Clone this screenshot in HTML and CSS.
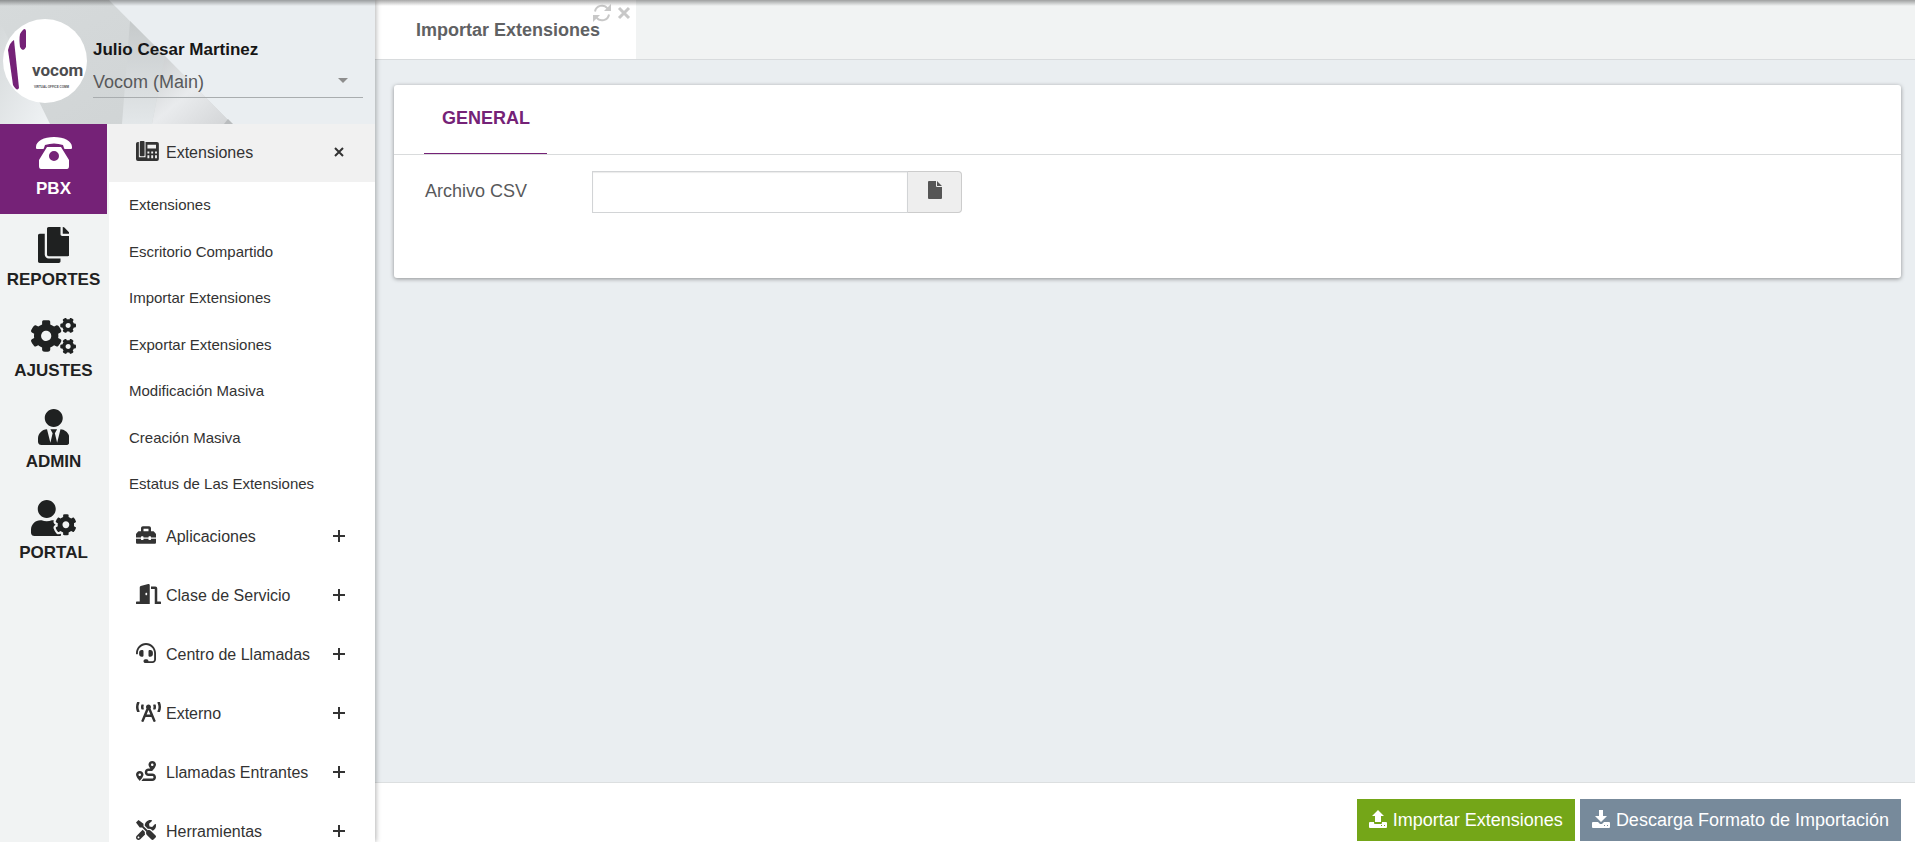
FILE: index.html
```html
<!DOCTYPE html>
<html lang="es">
<head>
<meta charset="utf-8">
<title>Importar Extensiones</title>
<link rel="stylesheet" href="styles.css">
</head>
<body>
<div class="app">
  <aside class="sidebar">
    <header class="profile">
      <svg class="profile-art" viewBox="0 0 375 124" preserveAspectRatio="none" aria-hidden="true">
        <defs>
          <linearGradient id="g1" x1="0" y1="0" x2="1" y2="1"><stop offset="0" stop-color="#d6dadb"/><stop offset="1" stop-color="#cfd3d4"/></linearGradient>
          <linearGradient id="g2" x1="0" y1="0" x2="1" y2="1"><stop offset="0" stop-color="#d5d9da"/><stop offset="1" stop-color="#f0f3f5"/></linearGradient>
          <linearGradient id="g3" x1="0" y1="0" x2="1" y2="1"><stop offset="0" stop-color="#c9cccd"/><stop offset=".5" stop-color="#e9ebed"/><stop offset="1" stop-color="#d2d4d6"/></linearGradient>
          <linearGradient id="g4" x1="0" y1="0" x2="0" y2="1"><stop offset="0" stop-color="#c6cacb"/><stop offset="1" stop-color="#e3e7e9"/></linearGradient>
        </defs>
        <path d="M0 0H109L232 124H0Z" fill="url(#g1)"/>
        <path d="M0 22L50 124H0Z" fill="url(#g2)"/>
        <path d="M130 21L165 56L152 124H122Z" fill="url(#g4)"/>
        <path d="M165 56L232 124H152Z" fill="url(#g3)"/>
        <path d="M228 119L233 124H224Z" fill="#b9bcbe"/>
      </svg>
      <svg class="avatar" viewBox="0 0 84 84" role="img" aria-label="Vocom">
        <circle cx="42" cy="42" r="42" fill="#fff"/>
        <path d="M5 31Q7 23 11 21L16 69Q14 73 10 66Z" fill="#752277"/>
        <path d="M17 15Q22 7 23 12V28Q20 34 17 28Q16 20 17 15Z" fill="#752277"/>
        <text class="logo-word" x="29" y="57">vocom</text>
        <text class="logo-tag" x="31" y="69">VIRTUAL OFFICE COMM</text>
      </svg>
      <div class="profile-info">
        <strong class="profile-name">Julio Cesar Martinez</strong>
        <div class="tenant">
          <select class="tenant-select" aria-label="Empresa"><option>Vocom (Main)</option></select>
          <svg class="tenant-caret" viewBox="0 0 10 5" aria-hidden="true"><path d="M0 0H10L5 5Z"/></svg>
        </div>
      </div>
    </header>

    <div class="menus">
      <nav class="modules" aria-label="Módulos">
        <a class="module active" href="#">
          <svg viewBox="0 0 36 36"><path fill-rule="evenodd" d="M0 11C0 5 8 1 18 1S36 5 36 11V12Q36 13 35 13H29Q28 13 28 12L27 9Q18 6 9 9L8 12Q8 13 7 13H1Q0 13 0 12ZM11 11H25L33 24V30Q33 33 31 33H5Q3 33 3 30V24ZM18 15A5 5 0 1 0 18 25A5 5 0 1 0 18 15Z"/></svg>
          <span>PBX</span>
        </a>
        <a class="module" href="#">
          <svg viewBox="0 0 448 512"><path d="M320 448v40c0 13.255-10.745 24-24 24H24c-13.255 0-24-10.745-24-24V120c0-13.255 10.745-24 24-24h72v296c0 30.879 25.121 56 56 56h168zm0-344V0H152c-13.255 0-24 10.745-24 24v368c0 13.255 10.745 24 24 24h272c13.255 0 24-10.745 24-24V128H344c-13.2 0-24-10.8-24-24zm120.971-31.029L375.029 7.029A24 24 0 0 0 358.059 0H352v96h96v-6.059a24 24 0 0 0-7.029-16.97z"/></svg>
          <span>REPORTES</span>
        </a>
        <a class="module" href="#">
          <svg viewBox="0 0 640 512"><path d="M512.1 191l-8.2 14.3c-3 5.3-9.4 7.5-15.1 5.4-11.8-4.4-22.6-10.7-32.1-18.6-4.6-3.8-5.8-10.5-2.8-15.7l8.2-14.3c-6.9-8-12.3-17.3-15.9-27.4h-16.5c-6 0-11.2-4.3-12.2-10.3-2-12-2.1-24.6 0-37.1 1-6 6.2-10.4 12.2-10.4h16.5c3.6-10.1 9-19.4 15.9-27.4l-8.2-14.3c-3-5.2-1.9-11.9 2.8-15.7 9.5-7.9 20.4-14.2 32.1-18.6 5.7-2.1 12.1.1 15.1 5.4l8.2 14.3c10.5-1.9 21.2-1.9 31.7 0L552 6.3c3-5.3 9.4-7.5 15.1-5.4 11.8 4.4 22.6 10.7 32.1 18.6 4.6 3.8 5.8 10.5 2.8 15.7l-8.2 14.3c6.9 8 12.3 17.3 15.9 27.4h16.5c6 0 11.2 4.3 12.2 10.3 2 12 2.1 24.6 0 37.1-1 6-6.2 10.4-12.2 10.4h-16.5c-3.6 10.1-9 19.4-15.9 27.4l8.2 14.3c3 5.2 1.9 11.9-2.8 15.7-9.5 7.9-20.4 14.2-32.1 18.6-5.7 2.1-12.1-.1-15.1-5.4l-8.2-14.3c-10.4 1.9-21.2 1.9-31.7 0zm-10.5-58.8c38.5 29.6 82.4-14.3 52.8-52.8-38.5-29.7-82.4 14.3-52.8 52.8zM386.3 286.1l33.7 16.8c10.1 5.8 14.5 18.1 10.5 29.1-8.9 24.2-26.4 46.4-42.6 65.8-7.4 8.9-20.2 11.1-30.3 5.3l-29.1-16.8c-16 13.7-34.6 24.6-54.9 31.7v33.6c0 11.6-8.3 21.6-19.7 23.6-24.6 4.2-50.4 4.4-75.9 0-11.5-2-20-11.9-20-23.6V418c-20.3-7.2-38.9-18-54.9-31.7L74 403c-10 5.8-22.9 3.6-30.3-5.3-16.2-19.4-33.3-41.6-42.2-65.7-4-10.9.4-23.2 10.5-29.1l33.3-16.8c-3.9-20.9-3.9-42.4 0-63.4L12 205.8c-10.1-5.8-14.6-18.1-10.5-29 8.9-24.2 26-46.4 42.2-65.8 7.4-8.9 20.2-11.1 30.3-5.3l29.1 16.8c16-13.7 34.6-24.6 54.9-31.7V57.1c0-11.5 8.2-21.5 19.6-23.5 24.6-4.2 50.5-4.4 76-.1 11.5 2 20 11.9 20 23.6v33.6c20.3 7.2 38.9 18 54.9 31.7l29.1-16.8c10-5.8 22.9-3.6 30.3 5.3 16.2 19.4 33.2 41.6 42.1 65.8 4 10.9.1 23.2-10 29.1l-33.7 16.8c3.9 21 3.9 42.5 0 63.5zm-117.6 21.1c59.2-77-28.7-164.9-105.7-105.7-59.2 77 28.7 164.9 105.7 105.7zm243.4 182.7l-8.2 14.3c-3 5.3-9.4 7.5-15.1 5.4-11.8-4.4-22.6-10.7-32.1-18.6-4.6-3.8-5.8-10.5-2.8-15.7l8.2-14.3c-6.9-8-12.3-17.3-15.9-27.4h-16.5c-6 0-11.2-4.3-12.2-10.3-2-12-2.1-24.6 0-37.1 1-6 6.2-10.4 12.2-10.4h16.5c3.6-10.1 9-19.4 15.9-27.4l-8.2-14.3c-3-5.2-1.9-11.9 2.8-15.7 9.5-7.9 20.4-14.2 32.1-18.6 5.7-2.1 12.1.1 15.1 5.4l8.2 14.3c10.5-1.9 21.2-1.9 31.7 0l8.2-14.3c3-5.3 9.4-7.5 15.1-5.4 11.8 4.4 22.6 10.7 32.1 18.6 4.6 3.8 5.8 10.5 2.8 15.7l-8.2 14.3c6.9 8 12.3 17.3 15.9 27.4h16.5c6 0 11.2 4.3 12.2 10.3 2 12 2.1 24.6 0 37.1-1 6-6.2 10.4-12.2 10.4h-16.5c-3.6 10.1-9 19.4-15.9 27.4l8.2 14.3c3 5.2 1.9 11.9-2.8 15.7-9.5 7.9-20.4 14.2-32.1 18.6-5.7 2.1-12.1-.1-15.1-5.4l-8.2-14.3c-10.4 1.9-21.2 1.9-31.7 0zM501.6 431c38.5 29.6 82.4-14.3 52.8-52.8-38.5-29.6-82.4 14.3-52.8 52.8z"/></svg>
          <span>AJUSTES</span>
        </a>
        <a class="module" href="#">
          <svg viewBox="0 0 448 512"><path d="M224 256c70.7 0 128-57.3 128-128S294.7 0 224 0 96 57.3 96 128s57.3 128 128 128zm95.8 32.6L272 480l-32-136 32-56h-96l32 56-32 136-47.8-191.4C56.9 292 0 350.3 0 422.4V464c0 26.5 21.5 48 48 48h352c26.5 0 48-21.5 48-48v-41.6c0-72.1-56.9-130.4-128.2-133.8z"/></svg>
          <span>ADMIN</span>
        </a>
        <a class="module" href="#">
          <svg viewBox="0 0 640 512"><path d="M610.5 373.3c2.6-14.1 2.6-28.5 0-42.6l25.8-14.9c3-1.7 4.3-5.2 3.3-8.5-6.7-21.6-18.2-41.2-33.2-57.4-2.3-2.5-6-3.1-9-1.4l-25.8 14.9c-10.9-9.3-23.4-16.5-36.9-21.3v-29.8c0-3.4-2.4-6.4-5.7-7.1-22.3-5-45-4.8-66.2 0-3.3.7-5.7 3.7-5.7 7.1v29.8c-13.5 4.8-26 12-36.9 21.3l-25.8-14.9c-2.9-1.7-6.7-1.1-9 1.4-15 16.2-26.5 35.8-33.2 57.4-1 3.3.4 6.8 3.3 8.5l25.8 14.9c-2.6 14.1-2.6 28.5 0 42.6l-25.8 14.9c-3 1.7-4.3 5.2-3.3 8.5 6.7 21.6 18.2 41.1 33.2 57.4 2.3 2.5 6 3.1 9 1.4l25.8-14.9c10.9 9.3 23.4 16.5 36.9 21.3v29.8c0 3.4 2.4 6.4 5.7 7.1 22.3 5 45 4.8 66.2 0 3.3-.7 5.7-3.7 5.7-7.1v-29.8c13.5-4.8 26-12 36.9-21.3l25.8 14.9c2.9 1.7 6.7 1.1 9-1.4 15-16.2 26.5-35.8 33.2-57.4 1-3.3-.4-6.8-3.3-8.5l-25.8-14.9zM496 400.5c-26.8 0-48.5-21.8-48.5-48.5s21.8-48.5 48.5-48.5 48.5 21.8 48.5 48.5-21.7 48.5-48.5 48.5zM224 256c70.7 0 128-57.3 128-128S294.7 0 224 0 96 57.3 96 128s57.3 128 128 128zm201.2 226.5c-2.3-1.2-4.6-2.6-6.8-3.9l-7.9 4.6c-6 3.4-12.8 5.3-19.6 5.3-10.9 0-21.4-4.6-28.9-12.6-18.3-19.8-32.3-43.9-40.2-69.6-5.5-17.7 1.9-36.4 17.9-45.7l7.9-4.6c-.1-2.6-.1-5.2 0-7.8l-7.9-4.6c-16-9.2-23.4-28-17.9-45.7.9-2.9 2.2-5.8 3.2-8.7-3.8-.3-7.5-1.2-11.4-1.2h-16.7c-22.2 10.2-46.9 16-72.9 16s-50.6-5.8-72.9-16h-16.7C60.2 288 0 348.2 0 422.4V464c0 26.5 21.5 48 48 48h352c10.1 0 19.5-3.2 27.2-8.5-1.2-3.8-2-7.7-2-11.8v-9.2z"/></svg>
          <span>PORTAL</span>
        </a>
      </nav>

      <nav class="menu" aria-label="PBX">
        <button class="group open" type="button" aria-expanded="true">
          <svg class="group-icon" viewBox="0 0 24 21" preserveAspectRatio="xMinYMid"><path fill-rule="evenodd" d="M0 3Q0 1 2 1H3V17H10V1H22Q24 1 24 3V19Q24 21 22 21H2Q0 21 0 19ZM12 4V8H21V4ZM12 11V13H14V11ZM12 15V18H14V15ZM16 11V13H18V11ZM16 15V18H18V15ZM20 11V13H22V11ZM20 15V18H22V15Z"/><rect x="4" y="0" width="5" height="16" rx="1"/></svg>
          <span class="group-label">Extensiones</span>
          <svg class="group-mark" viewBox="0 0 12 12"><path d="M2 2L10 10M10 2L2 10"/></svg>
        </button>
        <ul class="submenu">
          <li><a href="#">Extensiones</a></li>
          <li><a href="#">Escritorio Compartido</a></li>
          <li><a href="#">Importar Extensiones</a></li>
          <li><a href="#">Exportar Extensiones</a></li>
          <li><a href="#">Modificación Masiva</a></li>
          <li><a href="#">Creación Masiva</a></li>
          <li><a href="#">Estatus de Las Extensiones</a></li>
        </ul>
        <button class="group" type="button" aria-expanded="false">
          <svg class="group-icon" viewBox="0 0 512 512" preserveAspectRatio="xMinYMid"><path d="M502.63 214.63l-45.25-45.25c-6-6-14.14-9.37-22.63-9.37H384V80c0-26.51-21.49-48-48-48H176c-26.51 0-48 21.49-48 48v80H77.25c-8.49 0-16.62 3.37-22.63 9.37L9.37 214.63c-6 6-9.37 14.14-9.37 22.63V320h128v-16c0-8.84 7.16-16 16-16h32c8.84 0 16 7.16 16 16v16h128v-16c0-8.84 7.16-16 16-16h32c8.84 0 16 7.16 16 16v16h128v-82.75c0-8.48-3.37-16.62-9.37-22.62zM320 160H192V96h128v64zm64 208c0 8.84-7.16 16-16 16h-32c-8.84 0-16-7.16-16-16v-16H192v16c0 8.84-7.16 16-16 16h-32c-8.84 0-16-7.16-16-16v-16H0v96c0 17.67 14.33 32 32 32h448c17.67 0 32-14.33 32-32v-96H384v16z"/></svg>
          <span class="group-label">Aplicaciones</span>
          <svg class="group-mark" viewBox="0 0 12 12"><path d="M0 6H12M6 0V12"/></svg>
        </button>
        <button class="group" type="button" aria-expanded="false">
          <svg class="group-icon" viewBox="0 0 640 512" preserveAspectRatio="xMinYMid"><path d="M624 448h-80V113.45C544 86.19 522.47 64 496 64H384v64h96v384h144c8.84 0 16-7.16 16-16v-32c0-8.84-7.16-16-16-16zM312.24 1.01l-192 49.74C105.99 54.44 96 67.7 96 82.92V448H16c-8.84 0-16 7.16-16 16v32c0 8.84 7.16 16 16 16h336V33.18c0-21.58-19.56-37.41-39.76-32.17zM264 288c-13.25 0-24-14.33-24-32s10.75-32 24-32 24 14.33 24 32-10.75 32-24 32z"/></svg>
          <span class="group-label">Clase de Servicio</span>
          <svg class="group-mark" viewBox="0 0 12 12"><path d="M0 6H12M6 0V12"/></svg>
        </button>
        <button class="group" type="button" aria-expanded="false">
          <svg class="group-icon" viewBox="0 0 512 512" preserveAspectRatio="xMinYMid"><path d="M192 208c0-17.67-14.33-32-32-32h-16c-35.35 0-64 28.65-64 64v48c0 35.35 28.65 64 64 64h16c17.67 0 32-14.33 32-32V208zm176 144c35.35 0 64-28.65 64-64v-48c0-35.35-28.65-64-64-64h-16c-17.67 0-32 14.33-32 32v112c0 17.67 14.33 32 32 32h16zM256 0C113.18 0 4.58 118.83 0 256v16c0 8.84 7.16 16 16 16h16c8.84 0 16-7.16 16-16v-16c0-114.69 93.31-208 208-208s208 93.31 208 208h-.12c.08 2.43.12 165.72.12 165.72 0 23.35-18.93 42.28-42.28 42.28H320c0-26.51-21.49-48-48-48h-32c-26.51 0-48 21.49-48 48s21.49 48 48 48h181.72c49.86 0 90.28-40.42 90.28-90.28V256C507.42 118.83 398.82 0 256 0z"/></svg>
          <span class="group-label">Centro de Llamadas</span>
          <svg class="group-mark" viewBox="0 0 12 12"><path d="M0 6H12M6 0V12"/></svg>
        </button>
        <button class="group" type="button" aria-expanded="false">
          <svg class="group-icon" viewBox="0 0 640 512" preserveAspectRatio="xMinYMid"><path d="M150.94 192h33.73c11.01 0 18.61-10.83 14.86-21.18-4.93-13.58-7.55-27.98-7.55-42.82s2.62-29.24 7.55-42.82C203.29 74.83 195.68 64 184.67 64h-33.73c-7.01 0-13.46 4.49-15.41 11.23C130.64 92.21 128 109.88 128 128c0 18.12 2.64 35.79 7.54 52.76 1.94 6.74 8.39 11.24 15.4 11.24zM89.92 23.34C95.56 12.72 87.97 0 75.96 0H40.63c-6.27 0-12.14 3.59-14.74 9.31C9.4 45.54 0 85.65 0 128c0 24.75 3.12 68.33 26.69 118.86 2.62 5.63 8.42 9.14 14.61 9.14h34.84c12.02 0 19.61-12.74 13.95-23.37-49.78-93.32-16.71-178.15-.17-209.29zM614.06 9.29C611.46 3.58 605.6 0 599.33 0h-35.42c-11.98 0-19.66 12.66-14.02 23.25 18.27 34.29 48.42 119.42.28 209.23-5.72 10.68 1.8 23.52 13.91 23.52h35.23c6.27 0 12.13-3.58 14.73-9.29C630.57 210.48 640 170.36 640 128s-9.42-82.48-25.94-118.71zM489.06 64h-33.73c-11.01 0-18.61 10.83-14.86 21.18 4.93 13.58 7.55 27.98 7.55 42.82s-2.62 29.24-7.55 42.82c-3.76 10.35 3.85 21.18 14.86 21.18h33.73c7.02 0 13.46-4.49 15.41-11.24 4.9-16.97 7.53-34.64 7.53-52.76 0-18.12-2.64-35.79-7.54-52.76-1.94-6.75-8.39-11.24-15.4-11.24zm-116.3 100.12c7.05-10.29 11.2-22.71 11.2-36.12 0-35.35-28.63-64-63.96-64-35.32 0-63.96 28.65-63.96 64 0 13.41 4.15 25.83 11.2 36.12l-130.5 313.41c-3.4 8.15.46 17.52 8.61 20.92l29.51 12.31c8.15 3.4 17.52-.46 20.91-8.61L244.96 384h150.07l49.2 118.15c3.4 8.16 12.76 12.01 20.91 8.61l29.51-12.31c8.15-3.4 12-12.77 8.61-20.92l-130.5-313.41zM271.62 320L320 203.81 368.38 320h-96.76z"/></svg>
          <span class="group-label">Externo</span>
          <svg class="group-mark" viewBox="0 0 12 12"><path d="M0 6H12M6 0V12"/></svg>
        </button>
        <button class="group" type="button" aria-expanded="false">
          <svg class="group-icon" viewBox="0 0 512 512" preserveAspectRatio="xMinYMid"><path d="M416 320h-96c-17.6 0-32-14.4-32-32s14.4-32 32-32h96s96-107 96-160-43-96-96-96-96 43-96 96c0 25.5 22.2 63.4 45.3 96H320c-52.9 0-96 43.1-96 96s43.1 96 96 96h96c17.6 0 32 14.4 32 32s-14.4 32-32 32H185.5c-16 24.8-33.8 47.7-47.3 64H416c52.9 0 96-43.1 96-96s-43.1-96-96-96zm0-256c17.7 0 32 14.3 32 32s-14.3 32-32 32-32-14.3-32-32 14.3-32 32-32zM96 256c-53 0-96 43-96 96s96 160 96 160 96-107 96-160-43-96-96-96zm0 128c-17.7 0-32-14.3-32-32s14.3-32 32-32 32 14.3 32 32-14.3 32-32 32z"/></svg>
          <span class="group-label">Llamadas Entrantes</span>
          <svg class="group-mark" viewBox="0 0 12 12"><path d="M0 6H12M6 0V12"/></svg>
        </button>
        <button class="group" type="button" aria-expanded="false">
          <svg class="group-icon" viewBox="0 0 512 512" preserveAspectRatio="xMinYMid"><path d="M501.1 395.7L384 278.6c-23.1-23.1-57.6-27.6-85.4-13.9L192 158.1V96L64 0 0 64l96 128h62.1l106.6 106.6c-13.6 27.8-9.2 62.3 13.9 85.4l117.1 117.1c14.6 14.6 38.2 14.6 52.7 0l52.7-52.7c14.5-14.6 14.5-38.2 0-52.7zM331.7 225c28.3 0 54.9 11 74.9 31l19.4 19.4c15.8-6.9 30.8-16.5 43.8-29.5 37.1-37.1 49.7-89.3 37.9-136.7-2.2-9-13.5-12.1-20.1-5.5l-74.4 74.4-67.9-11.3L334 98.9l74.4-74.4c6.6-6.6 3.4-17.9-5.7-20.2-47.4-11.7-99.6.9-136.6 37.9-28.5 28.5-41.9 66.1-41.2 103.6l82.1 82.1c8.1-1.9 16.5-2.9 24.7-2.9zm-103.9 82l-56.7-56.7L18.7 402.8c-25 25-25 65.5 0 90.5s65.5 25 90.5 0l123.6-123.6c-7.6-19.9-9.9-41.6-5-62.7zM64 472c-13.2 0-24-10.8-24-24 0-13.3 10.7-24 24-24s24 10.7 24 24c0 13.2-10.7 24-24 24z"/></svg>
          <span class="group-label">Herramientas</span>
          <svg class="group-mark" viewBox="0 0 12 12"><path d="M0 6H12M6 0V12"/></svg>
        </button>
      </nav>
    </div>
  </aside>

  <main class="workspace">
    <div class="tabbar">
      <div class="tab">
        <span class="tab-title">Importar Extensiones</span>
        <div class="tab-tools">
          <button class="tool" type="button" aria-label="Recargar">
            <svg class="tool-refresh" viewBox="0 0 18 18"><path class="line" d="M2 7.500A7 7 0 0 1 14.500 4.500M16 10.500A7 7 0 0 1 3.500 13.500"/><path d="M18 0V7H11L13 5L16 2ZM0 18V11H7L5 13L2 16Z"/></svg>
          </button>
          <button class="tool" type="button" aria-label="Cerrar">
            <svg class="tool-close" viewBox="0 0 14 14"><path d="M2 2L12 12M12 2L2 12"/></svg>
          </button>
        </div>
      </div>
    </div>

    <div class="content">
      <section class="card">
        <div class="card-tabs">
          <button class="card-tab" type="button">GENERAL</button>
        </div>
        <form class="card-body">
          <label class="field-label" for="csv">Archivo CSV</label>
          <div class="file-field">
            <input class="file-input" id="csv" type="text">
            <button class="file-button" type="button" aria-label="Elegir archivo">
              <svg viewBox="0 0 14 18"><path d="M0 1Q0 0 1 0H8V5Q8 6 9 6H14V17Q14 18 13 18H1Q0 18 0 17ZM9 0L14 5H9Z"/></svg>
            </button>
          </div>
        </form>
      </section>
    </div>

    <footer class="actions">
      <button class="action action-primary" type="button">
        <svg viewBox="0 0 18 18"><path fill-rule="evenodd" d="M9 0L15 6H12V12H6V6H3ZM0 13Q0 12 1 12H5V13Q5 14 6 14H12Q13 14 13 13V12H17Q18 12 18 13V17Q18 18 17 18H1Q0 18 0 17ZM12 15V16H13V15ZM15 15V16H16V15Z"/></svg>
        Importar Extensiones
      </button>
      <button class="action action-secondary" type="button">
        <svg viewBox="0 0 18 18"><path fill-rule="evenodd" d="M7 0H11V6H15L9 12L3 6H7ZM0 13Q0 12 1 12H6L8 14H10L12 12H17Q18 12 18 13V17Q18 18 17 18H1Q0 18 0 17ZM12 15V16H13V15ZM15 15V16H16V15Z"/></svg>
        Descarga Formato de Importación
      </button>
    </footer>
  </main>
</div>
</body>
</html>
```
FILE: styles.css
```css
* { box-sizing: border-box; }

body {
  margin: 0;
  font-family: "Liberation Sans", Arial, sans-serif;
  font-size: 18px;
  color: #58595b;
  background: #eaeef1;
}

button, input, select { font: inherit; color: inherit; margin: 0; }
button { border: 0; background: none; padding: 0; cursor: pointer; }
a { color: inherit; text-decoration: none; }
svg { display: block; fill: currentColor; }

.app {
  position: relative;
  display: flex;
  height: 100vh;
  overflow: hidden;
}

/* soft shade along the top edge of the window */
.app::after {
  content: "";
  position: absolute;
  z-index: 2;
  inset: 0 0 auto;
  height: 6px;
  background: linear-gradient(rgba(0, 0, 0, .34), rgba(0, 0, 0, 0));
  pointer-events: none;
}

/* Sidebar */
.sidebar {
  position: relative;
  z-index: 1;
  flex: 0 0 375px;
  display: flex;
  flex-direction: column;
  background: #fff;
  box-shadow: 1px 0 5px rgba(0, 0, 0, .3);
}

.profile {
  position: relative;
  flex: none;
  display: flex;
  align-items: flex-start;
  gap: 6px;
  height: 124px;
  padding: 19px 12px 0 3px;
  background: #eaeef1;
}

.profile-art {
  position: absolute;
  inset: 0;
  width: 100%;
  height: 100%;
}

.avatar { position: relative; flex: none; width: 84px; height: 84px; }
.logo-word { font: bold 17px Roboto, sans-serif; fill: #4d4d4f; }
.logo-tag { font: bold 3px "Liberation Sans", sans-serif; fill: #4d4d4f; }

.profile-info { position: relative; flex: 1; padding-top: 20px; }
.profile-name { display: block; line-height: 22px; font-size: 17px; color: #161616; }

.tenant { position: relative; margin-top: 4px; border-bottom: 1px solid #a9adaf; }
.tenant-select {
  display: block;
  width: 100%;
  height: 32px;
  padding: 2px 0 0;
  border: 0;
  appearance: none;
  background: none;
  color: #58595b;
}
.tenant-caret {
  position: absolute;
  top: 13px;
  right: 15px;
  width: 10px;
  height: 5px;
  fill: #8d8d8d;
  pointer-events: none;
}

.menus { flex: 1; display: flex; min-height: 0; overflow: hidden; }

.modules { flex: 0 0 109px; padding-right: 2px; background: #f1f3f3; color: #1f2121; }
.module {
  display: flex;
  flex-direction: column;
  align-items: center;
  gap: 7px;
  height: 90px;
  margin-bottom: 1px;
  padding-top: 12px;
  font-size: 17px;
  font-weight: bold;
  line-height: 20px;
}
.module svg { height: 36px; }
.module.active { background: #752277; color: #fff; }

.menu { flex: 1; color: #333; }
.group {
  display: flex;
  align-items: center;
  width: 100%;
  height: 59px;
  padding: 0 30px 0 27px;
  font-size: 16px;
  text-align: left;
}
.group.open { height: 58px; background: #f1f1f1; }
.group-icon { flex: 0 0 30px; width: 30px; height: 20px; margin-bottom: 4px; }
.group-label { flex: 1; }
.group-mark {
  width: 12px;
  height: 12px;
  margin-bottom: 3px;
  fill: none;
  stroke: currentColor;
  stroke-width: 2;
}

.submenu { margin: 0; padding: 0; list-style: none; }
.submenu a {
  display: block;
  padding: 15px 20px;
  font-size: 15px;
  line-height: 1.1;
}

/* Workspace */
.workspace { flex: 1; min-width: 0; display: flex; flex-direction: column; }

.tabbar { display: flex; background: #f1f3f3; border-bottom: 1px solid #d8dbdd; }
.tab {
  position: relative;
  padding: 1px 36px 0 41px;
  line-height: 58px;
  font-weight: bold;
  color: #606163;
  background: #fff;
}
.tab-tools {
  position: absolute;
  top: 4px;
  right: 5px;
  display: flex;
  align-items: center;
  gap: 6px;
  color: #c8c8c8;
}
.tool-refresh { width: 18px; height: 18px; }
.tool-refresh .line { fill: none; stroke: currentColor; stroke-width: 2; }
.tool-close { width: 14px; height: 14px; stroke: currentColor; stroke-width: 3; }

.content { flex: 1; padding: 25px 14px 25px 19px; }
.card {
  min-height: 193px;
  background: #fff;
  border-radius: 3px;
  box-shadow: 0 1px 4px rgba(0, 0, 0, .4);
}
.card-tabs { display: flex; padding: 0 30px; border-bottom: 1px solid #d9dbdc; }
.card-tab {
  height: 69px;
  padding: 0 17px 1px 18px;
  border-bottom: 1px solid #752277;
  font-weight: bold;
  color: #752277;
}
.card-body { display: flex; align-items: flex-start; padding: 16px 31px; }
.field-label { flex: 0 0 167px; line-height: 40px; }
.file-field { display: flex; flex: 0 1 370px; height: 42px; }
.file-input {
  flex: 1;
  min-width: 0;
  padding: 6px 12px;
  border: 1px solid #d2d4d6;
  background: #fff;
  box-shadow: inset 0 1px 1px rgba(0, 0, 0, .08);
}
.file-button {
  display: flex;
  align-items: center;
  justify-content: center;
  width: 54px;
  padding-bottom: 4px;
  border: 1px solid #ccc;
  border-left: 0;
  border-radius: 0 4px 4px 0;
  background: #eee;
  color: #555;
}
.file-button svg { width: 14px; height: 18px; }

.actions {
  display: flex;
  justify-content: flex-end;
  gap: 5px;
  padding: 16px 14px 1px;
  background: #fff;
  border-top: 1px solid #dcdfe0;
}
.action {
  display: flex;
  align-items: center;
  gap: 6px;
  height: 42px;
  padding: 0 12px;
  color: #fff;
}
.action svg { width: 18px; height: 18px; margin-bottom: 3px; }
.action-primary { background: #74a618; }
.action-secondary { background: #778a9b; }
```
